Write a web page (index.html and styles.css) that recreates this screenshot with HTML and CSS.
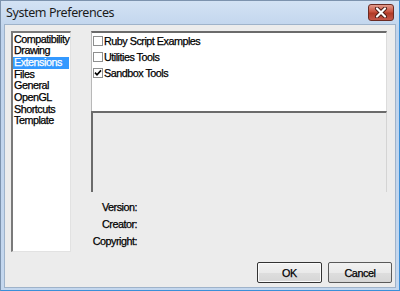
FILE: index.html
```html
<!DOCTYPE html>
<html lang="en">
  <head>
    <meta charset="UTF-8" />
    <meta name="viewport" content="width=device-width, initial-scale=1.0" />
    <link rel="stylesheet" href="styles.css">
    <title>System Preferences</title>
  </head>
  <body>
    <div class="window">
      <div class="titlebar">
        <span class="title">System Preferences</span>
        <button type="button" class="close-button">
          <svg width="14" height="11" viewBox="0 0 14 11">
            <path d="M3 1.5 L11 9.5 M11 1.5 L3 9.5" stroke="#4a1a14" stroke-width="4" stroke-linecap="round" />
            <path d="M3 1.5 L11 9.5 M11 1.5 L3 9.5" stroke="#ffffff" stroke-width="2.2" stroke-linecap="round" />
          </svg>
        </button>
      </div>

      <div class="client">
        <div class="main">
          <ul class="category-list">
            <li class="category-item">Compatibility</li>
            <li class="category-item">Drawing</li>
            <li class="category-item category-item--selected">Extensions</li>
            <li class="category-item">Files</li>
            <li class="category-item">General</li>
            <li class="category-item">OpenGL</li>
            <li class="category-item">Shortcuts</li>
            <li class="category-item">Template</li>
          </ul>

          <div class="details">
            <ul class="extension-list">
              <li class="extension-item"><span class="checkbox"></span>Ruby Script Examples</li>
              <li class="extension-item"><span class="checkbox"></span>Utilities Tools</li>
              <li class="extension-item">
                <span class="checkbox">
                  <svg width="8" height="8" viewBox="0 0 8 8">
                    <path d="M1 3.6 L3 5.8 L7 1.4" stroke="#000" stroke-width="1.6" fill="none" />
                  </svg>
                </span>Sandbox Tools
              </li>
            </ul>
            <div class="description"></div>
            <div class="info">
              <div class="info-row"><span class="info-label">Version:</span></div>
              <div class="info-row"><span class="info-label">Creator:</span></div>
              <div class="info-row"><span class="info-label">Copyright:</span></div>
            </div>
          </div>
        </div>

        <div class="buttons">
          <button type="button" class="button button--ok">OK</button>
          <button type="button" class="button">Cancel</button>
        </div>
      </div>
    </div>
  </body>
</html>
```

FILE: styles.css
```css
html,
body {
  margin: 0;
  padding: 0;
}

ul {
  margin: 0;
  padding: 0;
  list-style: none;
}

body {
  font-family: "Liberation Sans", Arial, sans-serif;
  font-size: 10.8px;
  letter-spacing: -0.5px;
  color: #000;
  -webkit-text-stroke: 0.25px #000;
}

.window {
  display: flex;
  flex-direction: column;
  box-sizing: border-box;
  width: 400px;
  height: 291px;

  background: linear-gradient(#d3e2f4, #bfd3ec 30px, #c4d7ee);
  border: 1px solid #7d93ae;
  border-right-color: #3a8fd8;
  border-bottom-color: #3a8fd8;
}

.titlebar {
  display: flex;
  align-items: flex-start;
  height: 23px;
  padding: 0 5px 0 5px;
}

.title {
  margin-top: 3px;
  font-family: "Noto Sans", "Open Sans", sans-serif;
  font-size: 12.5px;
  letter-spacing: -0.4px;
  -webkit-text-stroke: 0;
  color: #1b1b1b;
}

.close-button {
  display: flex;
  justify-content: center;
  align-items: center;
  width: 26px;
  height: 17px;
  margin-top: 3px;
  margin-left: auto;
  padding: 0;

  background: linear-gradient(#e29b8c, #c9523f 45%, #b03a26 55%, #c4574a);
  border: 1px solid #6b2a22;
  border-radius: 3px;
}

.client {
  display: flex;
  flex-direction: column;
  flex: 1;
  margin: 0 3px 2px 3px;
  padding: 6px 3px 0 6px;

  background-color: #ececec;
  border: 1px solid #9fb3ca;
}

.main {
  display: flex;
  gap: 20px;
  height: 221px;
}

.category-list {
  box-sizing: border-box;
  width: 60px;
  height: 221px;
  padding: 0.5px 1px 0 0;

  background-color: #fff;
  border-top: 2px solid #7a7a7a;
  border-left: 2px solid #7a7a7a;
  border-right: 1px solid #e2e2e2;
  border-bottom: 1px solid #e2e2e2;
}

.category-item {
  height: 11.7px;
  padding-left: 1px;
  line-height: 11.7px;
  white-space: nowrap;
}

.category-item--selected {
  background-color: #3399ff;
  color: #fff;
  -webkit-text-stroke: 0.25px #fff;
}

.details {
  display: flex;
  flex-direction: column;
  width: 296px;
}

.extension-list {
  box-sizing: border-box;
  height: 80px;
  padding-left: 1px;

  background-color: #fff;
  border-top: 2px solid #6b6b6b;
  border-left: 1px solid #b8b8b8;
  border-right: 1px solid #dcdcdc;
}

.extension-item {
  display: flex;
  align-items: center;
  height: 16px;
}

.checkbox {
  display: flex;
  justify-content: center;
  align-items: center;
  box-sizing: border-box;
  width: 10px;
  height: 10px;
  margin-right: 1px;

  background-color: #fff;
  border: 1px solid #8e8f8f;
}

.description {
  box-sizing: border-box;
  height: 81px;

  border-top: 2px solid #6b6b6b;
  border-left: 2px solid #6b6b6b;
  border-right: 1px solid #d4d4d4;
}

.info {
  padding-top: 6.5px;
}

.info-row {
  display: flex;
  align-items: center;
  height: 17px;
}

.info-label {
  width: 46px;
  text-align: right;
}

.buttons {
  display: flex;
  justify-content: flex-end;
  gap: 6px;
  margin-top: 10px;
}

.button {
  width: 64px;
  height: 21px;
  padding: 0;

  font-family: inherit;
  font-size: 10.8px;
  letter-spacing: -0.4px;
  color: #000;

  background: linear-gradient(#f2f2f2, #eaeaea 50%, #dedede 51%, #d6d6d6);
  border: 1px solid #5a5a5a;
  border-radius: 2px;
}

.button--ok {
  width: 65px;
  border-color: #333;
  box-shadow: inset 0 0 0 1px #fafafa;
}
```
